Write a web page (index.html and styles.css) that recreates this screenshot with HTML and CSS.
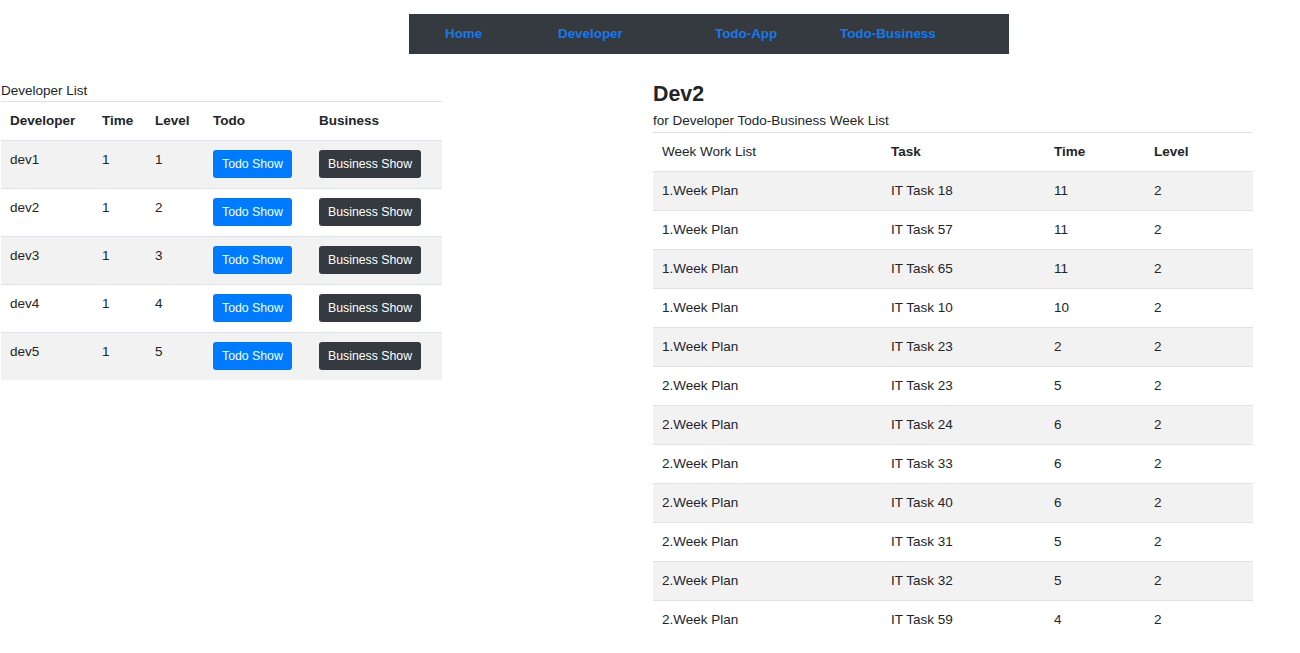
FILE: index.html
```html
<!DOCTYPE html>
<html lang="en">
<head>
<meta charset="utf-8">
<title>Developer Todo</title>
<link rel="stylesheet" href="styles.css">
</head>
<body>
<div class="topbar">
  <nav class="nav">
    <a href="#" class="nav-link">Home</a>
    <a href="#" class="nav-link">Developer</a>
    <a href="#" class="nav-link">Todo-App</a>
    <a href="#" class="nav-link">Todo-Business</a>
  </nav>
</div>
<main class="main">
  <section class="left">
    <div class="caption">Developer List</div>
    <table class="table dev-table">
      <colgroup>
        <col class="c1"><col class="c2"><col class="c3"><col class="c4"><col class="c5">
      </colgroup>
      <thead>
        <tr><th>Developer</th><th>Time</th><th>Level</th><th>Todo</th><th>Business</th></tr>
      </thead>
      <tbody>
        <tr><td>dev1</td><td>1</td><td>1</td><td><button class="btn btn-blue">Todo Show</button></td><td><button class="btn btn-dark">Business Show</button></td></tr>
        <tr><td>dev2</td><td>1</td><td>2</td><td><button class="btn btn-blue">Todo Show</button></td><td><button class="btn btn-dark">Business Show</button></td></tr>
        <tr><td>dev3</td><td>1</td><td>3</td><td><button class="btn btn-blue">Todo Show</button></td><td><button class="btn btn-dark">Business Show</button></td></tr>
        <tr><td>dev4</td><td>1</td><td>4</td><td><button class="btn btn-blue">Todo Show</button></td><td><button class="btn btn-dark">Business Show</button></td></tr>
        <tr><td>dev5</td><td>1</td><td>5</td><td><button class="btn btn-blue">Todo Show</button></td><td><button class="btn btn-dark">Business Show</button></td></tr>
      </tbody>
    </table>
  </section>
  <section class="right">
    <h2 class="title">Dev2</h2>
    <div class="subtitle">for Developer Todo-Business Week List</div>
    <table class="table week-table">
      <colgroup>
        <col class="w1"><col class="w2"><col class="w3"><col class="w4">
      </colgroup>
      <thead>
        <tr><td>Week Work List</td><th>Task</th><th>Time</th><th>Level</th></tr>
      </thead>
      <tbody>
        <tr><td>1.Week Plan</td><td>IT Task 18</td><td>11</td><td>2</td></tr>
        <tr><td>1.Week Plan</td><td>IT Task 57</td><td>11</td><td>2</td></tr>
        <tr><td>1.Week Plan</td><td>IT Task 65</td><td>11</td><td>2</td></tr>
        <tr><td>1.Week Plan</td><td>IT Task 10</td><td>10</td><td>2</td></tr>
        <tr><td>1.Week Plan</td><td>IT Task 23</td><td>2</td><td>2</td></tr>
        <tr><td>2.Week Plan</td><td>IT Task 23</td><td>5</td><td>2</td></tr>
        <tr><td>2.Week Plan</td><td>IT Task 24</td><td>6</td><td>2</td></tr>
        <tr><td>2.Week Plan</td><td>IT Task 33</td><td>6</td><td>2</td></tr>
        <tr><td>2.Week Plan</td><td>IT Task 40</td><td>6</td><td>2</td></tr>
        <tr><td>2.Week Plan</td><td>IT Task 31</td><td>5</td><td>2</td></tr>
        <tr><td>2.Week Plan</td><td>IT Task 32</td><td>5</td><td>2</td></tr>
        <tr><td>2.Week Plan</td><td>IT Task 59</td><td>4</td><td>2</td></tr>
      </tbody>
    </table>
  </section>
</main>
</body>
</html>
```

FILE: styles.css
```css
html, body {
  margin: 0;
  padding: 0;
  background: #fff;
  overflow: hidden;
}
body {
  font-family: "Liberation Sans", Arial, sans-serif;
  font-size: 13.5px;
  color: #212529;
  line-height: 20px;
}

.topbar {
  padding: 14px 0 0 409px;
}
.nav {
  width: 600px;
  height: 40px;
  background: #343a40;
  display: grid;
  grid-template-columns: 113px 157px 125px 1fr;
  align-items: center;
  padding-left: 36px;
  box-sizing: border-box;
}
.nav-link {
  color: #1479f0;
  font-weight: bold;
  text-decoration: none;
  font-size: 13.4px;
}

.main {
  display: grid;
  grid-template-columns: 653px 1fr;
  padding-top: 27px;
}
.left {
  padding-left: 1px;
}
.caption {
  line-height: 20px;
}
.table {
  border-collapse: collapse;
  table-layout: fixed;
}
.table th,
.table td {
  border-top: 1px solid #dee2e6;
  padding: 9px 9px;
  text-align: left;
  vertical-align: top;
  line-height: 20px;
}
.table th {
  font-weight: bold;
}
.table tbody tr:nth-child(odd) {
  background: #f2f2f2;
}

.dev-table {
  width: 441px;
}
.dev-table .c1 { width: 92px; }
.dev-table .c2 { width: 53px; }
.dev-table .c3 { width: 58px; }
.dev-table .c4 { width: 106px; }
.dev-table .c5 { width: 132px; }
.dev-table tbody td {
  padding-bottom: 10px;
}

.btn {
  display: inline-block;
  vertical-align: top;
  height: 28px;
  padding: 0 9px;
  border: 0;
  border-radius: 3px;
  font-family: "Liberation Sans", Arial, sans-serif;
  font-size: 12.3px;
  line-height: 28px;
  color: #fff;
  cursor: pointer;
}
.btn-blue { background: #007bff; }
.btn-dark { background: #343a40; }

.title {
  margin: 0 0 4px 0;
  font-size: 21.33px;
  font-weight: bold;
  line-height: 26px;
}
.subtitle {
  line-height: 20px;
  margin-bottom: 1px;
}
.week-table {
  width: 600px;
}
.week-table .w1 { width: 229px; }
.week-table .w2 { width: 163px; }
.week-table .w3 { width: 100px; }
.week-table .w4 { width: 108px; }
```
